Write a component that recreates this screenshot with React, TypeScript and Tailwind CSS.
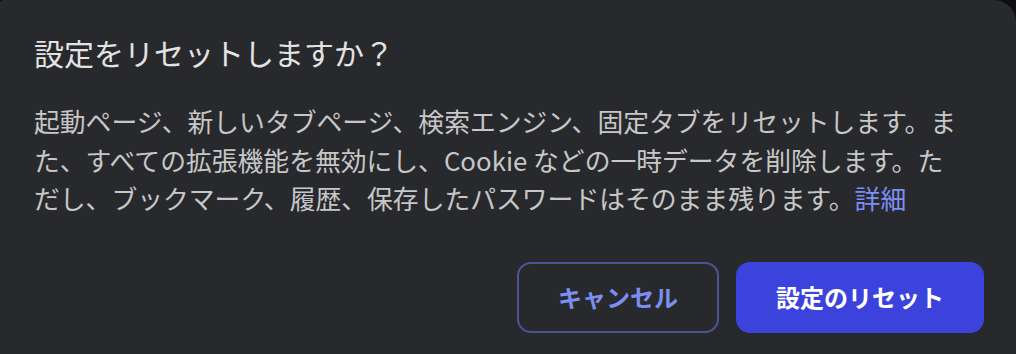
import React from "react";

export default function App() {
  const font = { fontFamily: '"Noto Sans CJK JP", "Noto Sans", sans-serif' };
  return (
    <div className="w-[1016px] h-[354px] bg-[#0e0e10] overflow-hidden" style={font}>
      <div className="w-full h-full bg-[#28292d] rounded-tr-[22px] rounded-tl-[4px] pt-[32px] px-[34px] flex flex-col">
        <h1 className="text-[30px] leading-[40px] text-[#e3e3e3] font-normal">
          設定をリセットしますか？
        </h1>
        <div className="mt-[30px] text-[25.8px] leading-[38.5px] text-[#c7c7c7] whitespace-nowrap">
          <div>起動ページ、新しいタブページ、検索エンジン、固定タブをリセットします。ま</div>
          <div>た、すべての拡張機能を無効にし、Cookie などの一時データを削除します。た</div>
          <div>
            だし、ブックマーク、履歴、保存したパスワードはそのまま残ります。
            <span className="text-[#7c8ef6]">詳細</span>
          </div>
        </div>
        <div className="mt-[44px] flex justify-end gap-[17px] mr-[-2px]">
          <button className="w-[202px] h-[71px] rounded-[14px] border-2 border-[#4a5596] text-[#7c8ef0] text-[24px] font-bold">
            キャンセル
          </button>
          <button className="w-[248px] h-[71px] rounded-[14px] bg-[#3c43dd] text-white text-[24px] font-bold">
            設定のリセット
          </button>
        </div>
      </div>
    </div>
  );
}
